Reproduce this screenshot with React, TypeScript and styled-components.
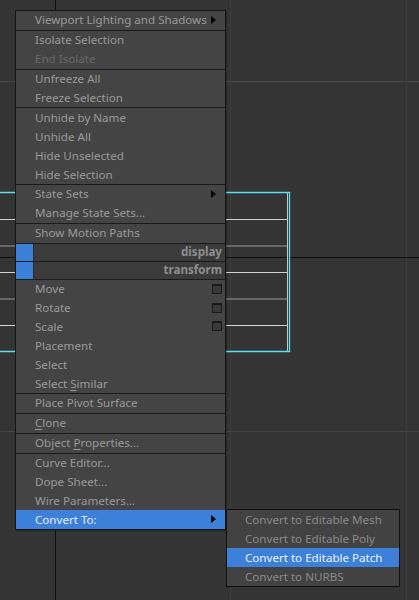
import React from "react";
import styled, { createGlobalStyle, css } from "styled-components";

const GlobalStyle = createGlobalStyle`
    html, body {
        margin: 0;
        padding: 0;
        background: #343434;
    }
    body {
        font-family: "Noto Sans", "Liberation Sans", sans-serif;
        font-size: 11.6px;
    }
`

const Viewport = styled.div`
    position: relative;
    width: 419px;
    height: 600px;
    overflow: hidden;
    background-color: #343434;

    > svg {
        display: block;
    }
`

const Menu = styled.div`
    position: absolute;
    top: 10px;
    left: 15px;
    width: 209px;
    border: 1px solid #151515;
    background-color: #444444;
    color: #9a9a9a;
    box-shadow: 1px 1px 0 rgba(0, 0, 0, 0.25);
`

const Group = styled.div`
    & + & {
        border-top: 1px solid #1b1b1b;
    }
`

const Item = styled.div<{ $disabled?: boolean; $active?: boolean }>`
    position: relative;
    display: flex;
    align-items: center;
    box-sizing: border-box;
    height: 18.9px;
    padding: 0 3px 1px 19px;
    white-space: nowrap;
    color: ${p => (p.$disabled ? "#686868" : "inherit")};

    ${p => p.$active && css`
        background-color: #3c80da;
        color: #e6edf8;
    `}

    u {
        text-decoration-thickness: 1px;
        text-underline-offset: 2px;
    }
`

const Label = styled.span`
    white-space: pre;
`

const Arrow = styled.span`
    margin-left: auto;
    margin-right: 6px;
    width: 0;
    height: 0;
    border-left: 5px solid #050505;
    border-top: 4.5px solid transparent;
    border-bottom: 4.5px solid transparent;
`

const OptionBox = styled.span`
    margin-left: auto;
    width: 8px;
    height: 7px;
    border: 1px solid #1a1a1a;
    border-top-width: 2px;
    background-color: #393939;
`

const HeaderRow = styled.div`
    display: flex;
    align-items: center;
    height: 17px;
    background-color: #3b3b3b;
    color: #8e8e8e;
    font-weight: bold;
`

const HeaderSwatch = styled.span`
    width: 17px;
    height: 100%;
    background-color: #3b7fd9;
    border-right: 1px solid #2c2c2c;
`

const HeaderLabel = styled.span`
    margin-left: auto;
    padding: 0 3px 1px 0;
`

const SubMenu = styled.div`
    position: absolute;
    top: -1px;
    left: calc(100% + 1px);
    width: 172px;
    border: 1px solid #101010;
    background-color: #424242;
    color: #8a8a8a;
`

const SubItem = styled.div<{ $active?: boolean }>`
    display: flex;
    align-items: center;
    box-sizing: border-box;
    height: 19px;
    padding: 0 0 1px 18px;
    white-space: nowrap;

    ${p => p.$active && css`
        background-color: #3c80da;
        color: #eef3fb;
    `}
`

function ViewportDrawing() {
    const rails = [
        { y: 219.5, c: "#d2d2d2" },
        { y: 246, c: "#9a9a9a" },
        { y: 272.5, c: "#d2d2d2" },
        { y: 299, c: "#9a9a9a" },
        { y: 325.5, c: "#d2d2d2" },
    ];
    return (
        <svg width="419" height="600" viewBox="0 0 419 600">
            {/* grid */}
            <line x1="0" y1="81.5" x2="419" y2="81.5" stroke="#484848" />
            <line x1="0" y1="431.5" x2="419" y2="431.5" stroke="#444444" />
            <line x1="230.5" y1="0" x2="230.5" y2="600" stroke="#3c3c3c" />
            <line x1="406.5" y1="0" x2="406.5" y2="600" stroke="#3c3c3c" />
            <line x1="55.5" y1="0" x2="55.5" y2="600" stroke="#101010" />
            <line x1="0" y1="257.5" x2="419" y2="257.5" stroke="#101010" />
            {/* selected wireframe object */}
            {rails.map(r => (
                <line key={r.y} x1="0" y1={r.y} x2="288" y2={r.y} stroke={r.c} />
            ))}
            <line x1="287.5" y1="193" x2="287.5" y2="351" stroke="#c8c8c8" />
            <path d="M-10 192.5 H289.5 V351.5 H-10" fill="none" stroke="#55e2ea" strokeWidth="1.3" />
        </svg>
    );
}

export default function App() {
    return (
        <Viewport>
            <GlobalStyle />
            <ViewportDrawing />
            <Menu>
                <Group>
                    <Item><Label>Viewport Lighting and Shadows</Label><Arrow /></Item>
                </Group>
                <Group>
                    <Item><Label>Isolate Selection</Label></Item>
                    <Item $disabled><Label>End Isolate</Label></Item>
                </Group>
                <Group>
                    <Item><Label>Unfreeze All</Label></Item>
                    <Item><Label>Freeze Selection</Label></Item>
                </Group>
                <Group>
                    <Item><Label>Unhide by Name</Label></Item>
                    <Item><Label>Unhide All</Label></Item>
                    <Item><Label>Hide Unselected</Label></Item>
                    <Item><Label>Hide Selection</Label></Item>
                </Group>
                <Group>
                    <Item><Label>State Sets</Label><Arrow /></Item>
                    <Item><Label>Manage State Sets...</Label></Item>
                </Group>
                <Group>
                    <Item><Label>Show Motion Paths</Label></Item>
                </Group>
                <Group>
                    <HeaderRow>
                        <HeaderSwatch />
                        <HeaderLabel>display</HeaderLabel>
                    </HeaderRow>
                </Group>
                <Group>
                    <HeaderRow>
                        <HeaderSwatch />
                        <HeaderLabel>transform</HeaderLabel>
                    </HeaderRow>
                </Group>
                <Group>
                    <Item><Label>Move</Label><OptionBox /></Item>
                    <Item><Label>Rotate</Label><OptionBox /></Item>
                    <Item><Label>Scale</Label><OptionBox /></Item>
                    <Item><Label>Placement</Label></Item>
                    <Item><Label>Select</Label></Item>
                    <Item><Label>Select <u>S</u>imilar</Label></Item>
                </Group>
                <Group>
                    <Item><Label>Place Pivot Surface</Label></Item>
                </Group>
                <Group>
                    <Item><Label><u>C</u>lone</Label></Item>
                </Group>
                <Group>
                    <Item><Label>Object <u>P</u>roperties...</Label></Item>
                </Group>
                <Group>
                    <Item><Label>Curve Editor...</Label></Item>
                    <Item><Label>Dope Sheet...</Label></Item>
                    <Item><Label>Wire Parameters...</Label></Item>
                    <Item $active>
                        <Label>Convert To:</Label>
                        <Arrow />
                        <SubMenu>
                            <SubItem>Convert to Editable Mesh</SubItem>
                            <SubItem>Convert to Editable Poly</SubItem>
                            <SubItem $active>Convert to Editable Patch</SubItem>
                            <SubItem>Convert to NURBS</SubItem>
                        </SubMenu>
                    </Item>
                </Group>
            </Menu>
        </Viewport>
    );
}
